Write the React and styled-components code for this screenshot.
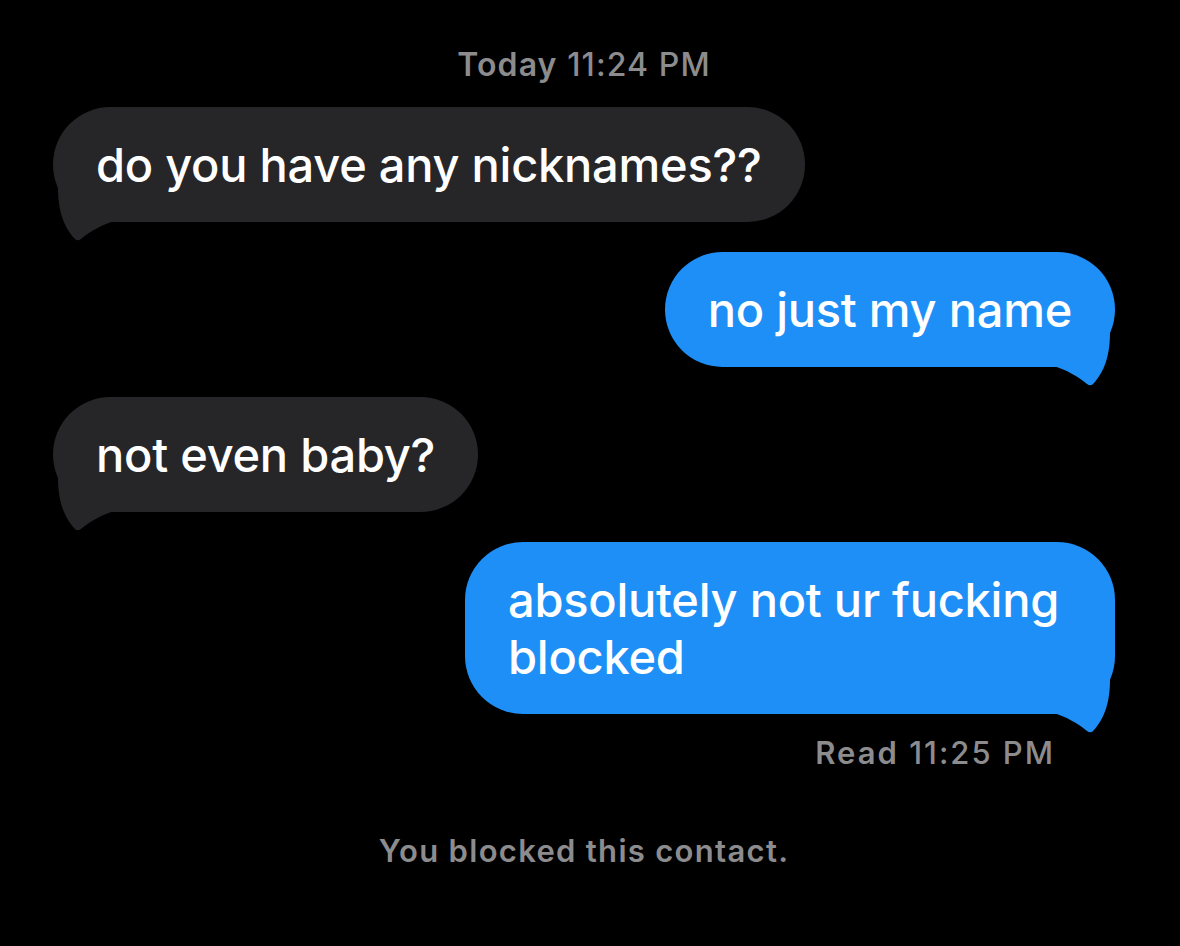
import React from "react";
import styled, { createGlobalStyle } from "styled-components";

const Global = createGlobalStyle`
  html, body { margin: 0; padding: 0; background: #000; }
  body { font-family: Inter, "Noto Sans", "Liberation Sans", sans-serif; }
`;

const Screen = styled.div`
  width: 1180px;
  height: 946px;
  background: #000;
  box-sizing: border-box;
  padding: 49px 65px 0 53px;
  display: flex;
  flex-direction: column;
`;

const Stamp = styled.div`
  align-self: center;
  color: #8c8c8e;
  font-size: 32px;
  font-weight: 500;
  line-height: 32px;
  letter-spacing: 1.1px;
  b { font-weight: 600; }
`;

const Row = styled.div`
  display: flex;
  justify-content: ${(p) => (p.$me ? "flex-end" : "flex-start")};
  margin-top: ${(p) => p.$mt || 30}px;
`;

const Bubble = styled.div`
  position: relative;
  max-width: ${(p) => p.$maxw || 780}px;
  box-sizing: border-box;
  padding: 29px 43px;
  border-radius: 58px;
  background: ${(p) => (p.$me ? "#1e8ff6" : "#262628")};
  color: #fff;
  font-size: 47px;
  font-weight: 500;
  line-height: 57px;
  letter-spacing: -0.25px;
`;

const Text = styled.span`
  position: relative;
`;

const TailSvg = styled.svg`
  position: absolute;
  bottom: -20px;
  ${(p) => (p.$me ? "right: 0; transform: scaleX(-1);" : "left: 0;")}
  width: 70px;
  height: 60px;
  overflow: visible;
`;

const Tail = ({ me, color }) => (
  <TailSvg $me={me} viewBox="0 0 70 60">
    <path
      d="M5 6 C5 34 14 48 21 56 Q24 60 28 57 C38 49 48 43 64 38 L64 0 L5 0 Z"
      fill={color}
    />
  </TailSvg>
);

const Meta = styled.div`
  align-self: flex-end;
  margin-right: 60px;
  margin-top: 23px;
  color: #8c8c8e;
  font-size: 31px;
  font-weight: 500;
  line-height: 32px;
  letter-spacing: 2px;
  b { font-weight: 600; }
`;

const Notice = styled.div`
  align-self: center;
  margin-top: 66px;
  color: #8c8c8e;
  font-size: 31px;
  font-weight: 600;
  line-height: 32px;
  letter-spacing: 1.3px;
`;

const Msg = ({ me, children, mt, maxw }) => (
  <Row $me={me} $mt={mt}>
    <Bubble $me={me} $maxw={maxw}>
      <Tail me={me} color={me ? "#1e8ff6" : "#262628"} />
      <Text>{children}</Text>
    </Bubble>
  </Row>
);

export default function App() {
  return (
    <>
      <Global />
      <Screen>
        <Stamp>
          <b>Today</b> 11:24 PM
        </Stamp>
        <Msg mt={26}>do you have any nicknames??</Msg>
        <Msg me>no just my name</Msg>
        <Msg>not even baby?</Msg>
        <Msg me maxw={650}>absolutely not ur fucking blocked</Msg>
        <Meta>
          <b>Read</b> 11:25 PM
        </Meta>
        <Notice>You blocked this contact.</Notice>
      </Screen>
    </>
  );
}
